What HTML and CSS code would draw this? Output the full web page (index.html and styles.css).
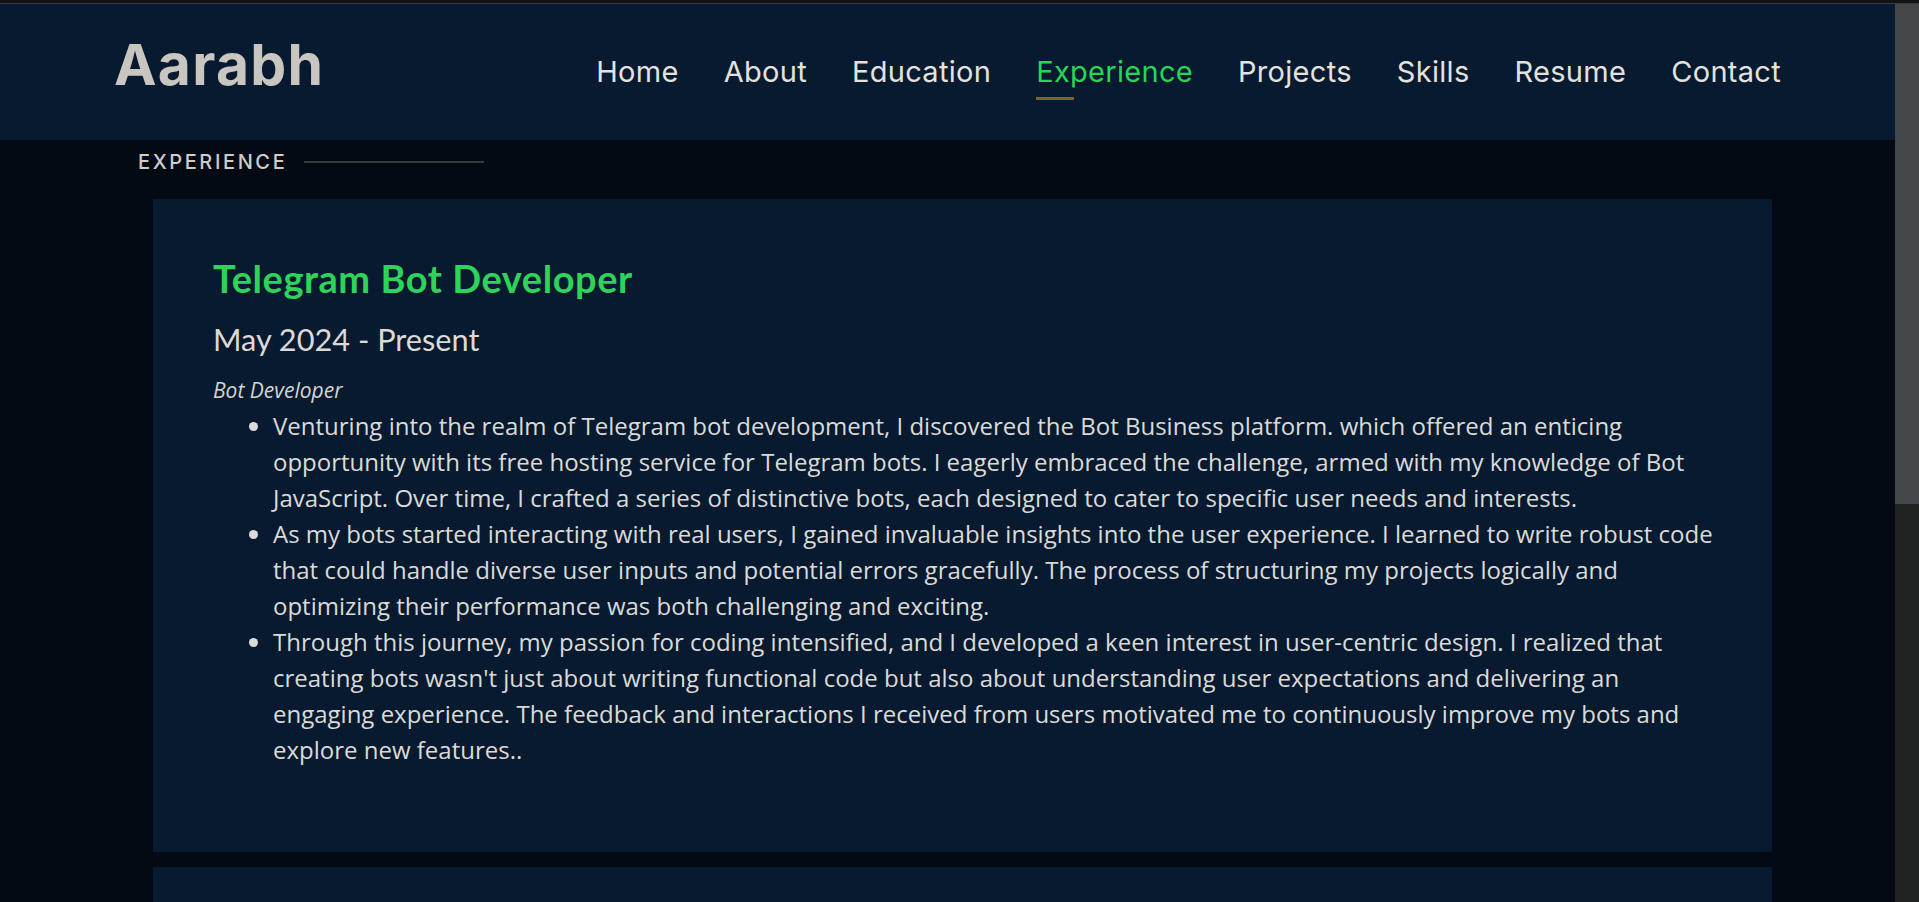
FILE: index.html
```html
<!DOCTYPE html>
<html lang="en">
<head>
<meta charset="utf-8">
<title>Aarabh - Experience</title>
<link rel="stylesheet" href="styles.css">
</head>
<body>
<div class="topline"></div>
<div class="window">
  <div class="page">
    <header class="header">
      <div class="logo">Aarabh</div>
      <nav class="nav">
        <a class="nav-link" href="#">Home</a>
        <a class="nav-link" href="#">About</a>
        <a class="nav-link" href="#">Education</a>
        <a class="nav-link active" href="#">Experience</a>
        <a class="nav-link" href="#">Projects</a>
        <a class="nav-link" href="#">Skills</a>
        <a class="nav-link" href="#">Resume</a>
        <a class="nav-link" href="#">Contact</a>
      </nav>
    </header>
    <section class="section">
      <div class="section-label">
        <span class="label-text">EXPERIENCE</span>
        <span class="label-line"></span>
      </div>
      <div class="cards">
        <article class="card">
          <h3 class="job-title">Telegram Bot Developer</h3>
          <h4 class="job-date">May 2024 - Present</h4>
          <p class="job-role">Bot Developer</p>
          <ul class="job-points">
            <li>Venturing into the realm of Telegram bot development, I discovered the Bot Business platform. which offered an enticing opportunity with its free hosting service for Telegram bots. I eagerly embraced the challenge, armed with my knowledge of Bot JavaScript. Over time, I crafted a series of distinctive bots, each designed to cater to specific user needs and interests.</li>
            <li>As my bots started interacting with real users, I gained invaluable insights into the user experience. I learned to write robust code that could handle diverse user inputs and potential errors gracefully. The process of structuring my projects logically and optimizing their performance was both challenging and exciting.</li>
            <li>Through this journey, my passion for coding intensified, and I developed a keen interest in user-centric design. I realized that creating bots wasn't just about writing functional code but also about understanding user expectations and delivering an engaging experience. The feedback and interactions I received from users motivated me to continuously improve my bots and explore new features..</li>
          </ul>
        </article>
        <article class="card card-next"></article>
      </div>
    </section>
  </div>
  <div class="scrollbar">
    <div class="scroll-thumb"></div>
    <div class="scroll-track"></div>
  </div>
</div>
</body>
</html>
```

FILE: styles.css
```css
* { box-sizing: border-box; }

html, body {
  margin: 0;
  padding: 0;
  height: 902px;
  overflow: hidden;
  background: #030a14;
}

body {
  display: flex;
  flex-direction: column;
  font-family: "Open Sans", "Liberation Sans", sans-serif;
}

.topline {
  height: 4px;
  flex: none;
  background: #111213;
  border-bottom: 1px solid #3b3c3d;
}

.window {
  flex: 1;
  display: flex;
  min-height: 0;
}

.page {
  flex: 1;
  min-width: 0;
  display: flex;
  flex-direction: column;
  overflow: hidden;
}

.scrollbar {
  width: 24px;
  flex: none;
  display: flex;
  flex-direction: column;
}

.scroll-thumb {
  height: 500px;
  background: #434649;
}

.scroll-track {
  flex: 1;
  background: #202222;
}

/* header */
.header {
  height: 136px;
  flex: none;
  background: #071a2f;
  display: flex;
  align-items: center;
  justify-content: space-between;
  padding: 0 114px 0 114px;
}

.logo {
  font-family: "Inter", "DejaVu Sans", sans-serif;
  font-weight: 700;
  font-size: 57px;
  line-height: 60px;
  color: #c9c5c0;
  letter-spacing: 1.3px;
  margin-top: -14px;
}

.nav {
  display: flex;
  align-items: center;
  gap: 45px;
}

.nav-link {
  position: relative;
  font-family: "Inter", "DejaVu Sans", sans-serif;
  font-weight: 400;
  font-size: 29px;
  line-height: 34px;
  color: #e4e2df;
  text-decoration: none;
  letter-spacing: 0.3px;
}

.nav-link.active {
  color: #26d654;
}

.nav-link.active::after {
  content: "";
  position: absolute;
  left: 0;
  top: 42px;
  width: 38px;
  height: 3px;
  background: #7b6425;
}

/* section */
.section {
  padding: 10px 0 0 138px;
}

.section-label {
  display: flex;
  align-items: center;
  height: 24px;
}

.label-text {
  font-family: "Inter", "DejaVu Sans", sans-serif;
  font-weight: 500;
  font-size: 20px;
  line-height: 24px;
  letter-spacing: 2.6px;
  color: #d0ccc7;
}

.label-line {
  width: 180px;
  height: 2px;
  background: #38393a;
  margin-left: 17px;
}

.cards {
  margin: 25px 0 0 15px;
  width: 1619px;
  display: flex;
  flex-direction: column;
  gap: 15px;
}

.card {
  background: #071a2f;
  padding: 57px 48px 84px 60px;
}

.card-next {
  height: 120px;
  padding: 0;
}

.job-title {
  margin: 0;
  font-family: "Lato", "Liberation Sans", sans-serif;
  font-weight: 700;
  font-size: 38px;
  line-height: 44px;
  letter-spacing: 0.55px;
  color: #2ed35a;
}

.job-date {
  margin: 22px 0 0 0;
  font-family: "Lato", "Liberation Sans", sans-serif;
  font-weight: 400;
  font-size: 30.7px;
  line-height: 36px;
  color: #dcdad7;
}

.job-role {
  margin: 19px 0 0 0;
  font-family: "Open Sans", "Liberation Sans", sans-serif;
  font-style: italic;
  font-size: 21px;
  line-height: 26px;
  color: #d6d4d1;
}

.job-points {
  margin: 5px 0 0 0;
  padding-left: 60px;
  font-family: "Open Sans", "Liberation Sans", sans-serif;
  font-size: 24px;
  line-height: 36px;
  color: #dcdad7;
}
```
